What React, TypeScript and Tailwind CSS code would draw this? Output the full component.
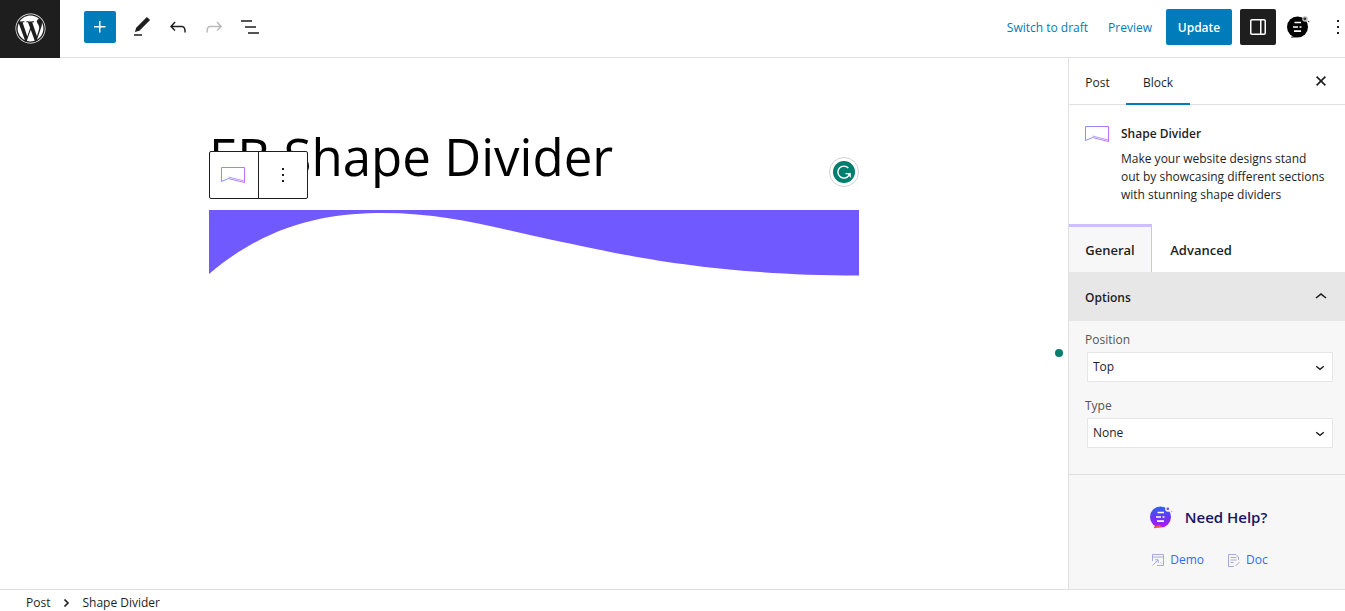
import { useState } from 'react';
import type { ReactNode } from 'react';
import { FaWordpress } from 'react-icons/fa';

const icons = {
  plus: 'M11 12.5V17.5H12.5V12.5H17.5V11H12.5V6H11V11H6V12.5H11Z',
  edit: 'M20.1 5.1L16.9 2 6.2 12.7l-1.3 4.4 4.5-1.3L20.1 5.1zM4 20.8h8v-1.5H4v1.5z',
  undo: 'M18.3 11.7c-.6-.6-1.4-.9-2.3-.9H6.7l2.9-3.3-1.1-1-4.5 5L8.5 16l1-1-2.7-2.7H16c.5 0 .9.2 1.3.5 1 1 1 3.4 1 4.5v.3h1.5v-.2c0-1.5 0-4.3-1.5-5.7z',
  redo: 'M15.6 6.5l-1.1 1 2.9 3.3H8c-.9 0-1.7.3-2.3.9-1.4 1.5-1.4 4.2-1.4 5.6v.2h1.5v-.3c0-1.1 0-3.5 1-4.5.3-.3.7-.5 1.3-.5h9.2L14.5 15l1.1 1.1 4.6-4.6-4.6-5z',
  listView: 'M3 5.3h11v1.5H3zM7 11.3h11v1.5H7zM10 17.3h11v1.5H10z',
  drawer: 'M18 4H6c-1.1 0-2 .9-2 2v12c0 1.1.9 2 2 2h12c1.1 0 2-.9 2-2V6c0-1.1-.9-2-2-2zm-4 14.5H6c-.3 0-.5-.2-.5-.5V6c0-.3.2-.5.5-.5h8v13zm4.5-.5c0 .3-.2.5-.5.5h-2.5v-13H18c.3 0 .5.2.5.5v12z',
  more: 'M13 19h-2v-2h2v2zm0-6h-2v-2h2v2zm0-6h-2V5h2v2z',
  chevronUp: 'M6.5 12.4L12 8l5.5 4.4-.9 1.2L12 10l-4.5 3.6-1-1.2z',
};

function Icon({ name, className = 'size-6' }: { name: keyof typeof icons; className?: string }) {
  return (
    <svg viewBox="0 0 24 24" fill="currentColor" aria-hidden="true" className={className}>
      <path d={icons[name]} />
    </svg>
  );
}

function ToolButton({ label, className = '', children }: { label: string; className?: string; children: ReactNode }) {
  return (
    <button type="button" aria-label={label} className={`flex size-9 shrink-0 items-center justify-center ${className}`}>
      {children}
    </button>
  );
}

function ShapeDividerIcon({ id }: { id: string }) {
  return (
    <svg viewBox="0 0 26 18" fill="none" stroke={`url(#${id})`} aria-hidden="true" className="h-[18px] w-[26px] shrink-0">
      <defs>
        <linearGradient id={id} x1="0" y1="0" x2="26" y2="0" gradientUnits="userSpaceOnUse">
          <stop stopColor="#6a8cff" />
          <stop offset="1" stopColor="#c35bff" />
        </linearGradient>
      </defs>
      <path d="M0.5 1.5H23.5V16.5L7.5 12.5L0.5 15.5Z" strokeWidth="0.9" />
      <path d="M7.5 11L23.5 15" strokeWidth="0.7" />
    </svg>
  );
}

function BlocksLogo({ color = false }: { color?: boolean }) {
  const fill = color ? 'url(#eb-logo)' : '#000000';
  return (
    <svg viewBox="0 0 24 24" aria-hidden="true" className="size-6 shrink-0">
      {color && (
        <defs>
          <linearGradient id="eb-logo" x1="12" y1="1" x2="12" y2="22" gradientUnits="userSpaceOnUse">
            <stop stopColor="#2d62ff" />
            <stop offset="0.55" stopColor="#6a35f0" />
            <stop offset="1" stopColor="#b116f5" />
          </linearGradient>
        </defs>
      )}
      <path d="M6 19.5L5 23.2L11 22.2Z" fill={color ? '#e0406a' : '#777777'} />
      <circle cx="11.5" cy="12" r="10.5" fill={fill} />
      <circle cx="19" cy="4" r="2.8" fill={color ? '#f7f7f7' : '#bbbbbb'} />
      <circle cx="18.8" cy="3.8" r="1.4" fill={color ? '#8d45f5' : '#333333'} />
      <circle cx="22.6" cy="6.5" r="0.8" fill={color ? '#ff9d5c' : '#444444'} />
      <path d="M8.5 7.5H15M7 12H12M13.5 12H15.5M8 16.2H15" stroke="#ffffff" strokeWidth="1.7" />
      {color && <path d="M5.5 22.5Q7 20 9 20.5Q12 19.5 13 21.8Z" fill="#ec5a4f" />}
    </svg>
  );
}

function EditorHeader() {
  return (
    <header className="flex h-[58px] shrink-0 items-stretch overflow-hidden">
      <a href="#posts" aria-label="View posts" className="flex w-[60px] shrink-0 items-center justify-center bg-[#1e1e1e] pb-0.5 text-white">
        <FaWordpress className="size-[31px]" />
      </a>
      <div className="flex flex-1 items-center border-b border-[#e0e0e0] pb-1 pl-6">
        <ToolButton label="Add block" className="mr-2 h-8! w-8! rounded-xs bg-[#007cba] text-white">
          <Icon name="plus" />
        </ToolButton>
        <ToolButton label="Tools"><Icon name="edit" /></ToolButton>
        <ToolButton label="Undo"><Icon name="undo" /></ToolButton>
        <ToolButton label="Redo" className="text-[#bbbbbb]"><Icon name="redo" /></ToolButton>
        <ToolButton label="List view"><Icon name="listView" /></ToolButton>
        <div className="ml-auto flex items-center">
          <button type="button" className="mr-5 pt-0.5 text-[#007cba]">Switch to draft</button>
          <button type="button" className="mr-3.5 pt-0.5 text-[#007cba]">Preview</button>
          <button type="button" className="mr-2 h-9 w-[66px] rounded-xs bg-[#007cba] pt-0.5 font-semibold text-white">Update</button>
          <ToolButton label="Settings" className="mr-1 rounded-xs bg-[#1e1e1e] text-white"><Icon name="drawer" /></ToolButton>
          <ToolButton label="Essential Blocks"><BlocksLogo /></ToolButton>
          <ToolButton label="Options" className="-mr-[11px] ml-1"><Icon name="more" /></ToolButton>
        </div>
      </div>
    </header>
  );
}

function Canvas() {
  return (
    <main className="relative min-w-0 flex-1 bg-white px-5">
      <div className="relative mx-auto max-w-[650px] pt-[60px]">
        <h1 className="h-[92px] text-[51px] leading-[76px] text-black">EB Shape Divider</h1>
        <svg viewBox="0 0 650 66" preserveAspectRatio="none" aria-hidden="true" className="h-[66px] w-full">
          <path d="M0 0H650V65.5C500 65 416 45 353 32C290 19 240 3 174 3C120 3 60 13 0 64Z" fill="#7059ff" />
        </svg>

        {/* Block toolbar sits over the title */}
        <div className="absolute top-[93px] left-0 flex h-12 rounded-xs border border-[#1e1e1e] bg-white">
          <button type="button" aria-label="Shape Divider" className="flex w-12 items-center justify-center">
            <ShapeDividerIcon id="toolbar-divider" />
          </button>
          <button type="button" aria-label="Options" className="flex w-[49px] items-center justify-center border-l border-[#1e1e1e]">
            <Icon name="more" />
          </button>
        </div>

        <button
          type="button"
          aria-label="Grammarly"
          className="absolute top-[99px] right-0 flex size-[30px] items-center justify-center rounded-full border border-[#d0d0da] bg-white"
        >
          <svg viewBox="0 0 22 22" aria-hidden="true" className="size-[22px] shrink-0">
            <circle cx="11" cy="11" r="11" fill="#027e6f" />
            <path d="M15.3 7A6 6 0 1 0 16 14.3L16.6 12.6H12.5" fill="none" stroke="#ffffff" strokeWidth="1.4" />
            <path d="M13.8 12.3H17.8V17Z" fill="#ffffff" />
          </svg>
        </button>
      </div>
      <span className="absolute top-[291px] right-[5px] size-2 rounded-full bg-[#027e6f]" />
    </main>
  );
}

function SelectField({ id, label, options }: { id: string; label: string; options: string[] }) {
  return (
    <div>
      <label htmlFor={id} className="block h-6 leading-6 font-medium text-[#555555]">{label}</label>
      <div className="ml-0.5 grid items-center">
        <select id={id} className="col-start-1 row-start-1 h-[30px] w-full appearance-none border border-[#e6e6e6] bg-white pl-[5px] text-[#1e1e1e]">
          {options.map((option) => <option key={option}>{option}</option>)}
        </select>
        <svg viewBox="0 0 10 10" fill="none" stroke="#1e1e1e" strokeWidth="1.4" aria-hidden="true" className="pointer-events-none col-start-1 row-start-1 mr-2 size-2.5 justify-self-end">
          <path d="M1.2 4.2L5 7.4L8.8 4.2" />
        </svg>
      </div>
    </div>
  );
}

function NeedHelp() {
  return (
    <div className="flex flex-1 flex-col items-center border-t border-[#e0e0e0] bg-[#f7f7f7] pt-[30px]">
      <div className="flex h-6 items-center gap-3 pl-0.5 text-[15px] font-semibold text-[#1b1464]">
        <BlocksLogo color />
        <span>Need Help?</span>
      </div>
      <div className="mt-[21px] ml-1.5 flex h-5 items-center gap-6 font-medium text-[#2f6bff]">
        <a href="#demo" className="flex items-center gap-1.5">
          <svg viewBox="0 0 12 12" fill="none" stroke="#a5abd6" aria-hidden="true" className="size-3">
            <path d="M0.5 7V0.5H11.5V11.5H5M0.5 3H11.5M0.5 11.5L6 6M3 5.8H6.2V9M8.5 8.5L9.5 9.5" />
          </svg>
          Demo
        </a>
        <a href="#doc" className="flex items-center gap-1.5">
          <svg viewBox="0 0 12 13" fill="none" stroke="#a5abd6" aria-hidden="true" className="h-[13px] w-3">
            <path d="M10.5 6V3L8 0.5H0.5V12.5H6M2.5 3.5H8.5M2.5 6H8.5M2.5 8.5H5.5M7.5 12L11.5 8" />
          </svg>
          Doc
        </a>
      </div>
    </div>
  );
}

function Sidebar() {
  const [tab, setTab] = useState<'general' | 'advanced'>('general');
  const [open, setOpen] = useState(true);

  return (
    <aside className="flex w-[277px] shrink-0 flex-col border-l border-[#e0e0e0]">
      <div className="flex h-[47px] shrink-0 items-stretch border-b border-[#e0e0e0]">
        <button type="button" className="w-[57px] pt-1">Post</button>
        <button type="button" className="-mb-px w-16 border-b-2 border-[#007cba] pt-1">Block</button>
        <button type="button" aria-label="Close settings" className="mr-3 ml-auto flex w-6 items-center justify-center">
          <svg viewBox="0 0 10 10" fill="none" stroke="currentColor" strokeWidth="1.6" aria-hidden="true" className="size-2.5">
            <path d="M0.6 0.6L9.4 9.4M9.4 0.6L0.6 9.4" />
          </svg>
        </button>
      </div>

      <div className="flex h-[119px] shrink-0 gap-2.5 px-4 pt-5">
        <ShapeDividerIcon id="card-divider" />
        <div className="-mr-3">
          <h2 className="leading-[18px] font-semibold">Shape Divider</h2>
          <p className="mt-[7px] leading-[18px]">
            Make your website designs stand
            <br />
            out by showcasing different sections
            <br />
            with stunning shape dividers
          </p>
        </div>
      </div>

      <div className="flex h-12 shrink-0 text-[13px] font-semibold">
        <button
          type="button"
          onClick={() => setTab('general')}
          className={`w-[83px] pt-0.5 ${tab === 'general' ? 'border-t-3 border-r border-[#cdc0ff] bg-[#f7f7f7]' : ''}`}
        >
          General
        </button>
        <button
          type="button"
          onClick={() => setTab('advanced')}
          className={`w-[98px] ${tab === 'advanced' ? 'border-x border-t-3 border-[#cdc0ff] bg-[#f7f7f7]' : 'pt-[5px]'}`}
        >
          Advanced
        </button>
      </div>

      <button
        type="button"
        onClick={() => setOpen(!open)}
        aria-expanded={open}
        className="flex h-[49px] shrink-0 items-center justify-between bg-[#e7e7e7] pr-3 pl-4 font-semibold"
      >
        <span className="pt-0.5">Options</span>
        <Icon name="chevronUp" className={open ? 'size-6' : 'size-6 rotate-180'} />
      </button>
      {open && (
        <div className="flex h-[153px] shrink-0 flex-col gap-3 bg-[#f7f7f7] pt-[7px] pr-3 pl-4">
          <SelectField id="divider-position" label="Position" options={['Top', 'Bottom']} />
          <SelectField id="divider-type" label="Type" options={['None', 'Wave', 'Curve', 'Tilt']} />
        </div>
      )}
      <NeedHelp />
    </aside>
  );
}

export default function App() {
  return (
    <div className="flex h-screen flex-col overflow-hidden bg-white font-['Open_Sans','Noto_Sans',sans-serif] text-xs text-[#1e1e1e]">
      <EditorHeader />
      <div className="flex min-h-0 flex-1">
        <Canvas />
        <Sidebar />
      </div>
      <footer className="h-[22px] shrink-0 border-t border-[#e0e0e0] pl-[26px]">
        <nav aria-label="Breadcrumb" className="flex items-center gap-3 pt-[5px] leading-4">
          <a href="#post">Post</a>
          <svg viewBox="0 0 8 8" fill="none" stroke="currentColor" strokeWidth="1.6" aria-hidden="true" className="size-2">
            <path d="M2.5 0.5L6 4L2.5 7.5" />
          </svg>
          <span>Shape Divider</span>
        </nav>
      </footer>
    </div>
  );
}
